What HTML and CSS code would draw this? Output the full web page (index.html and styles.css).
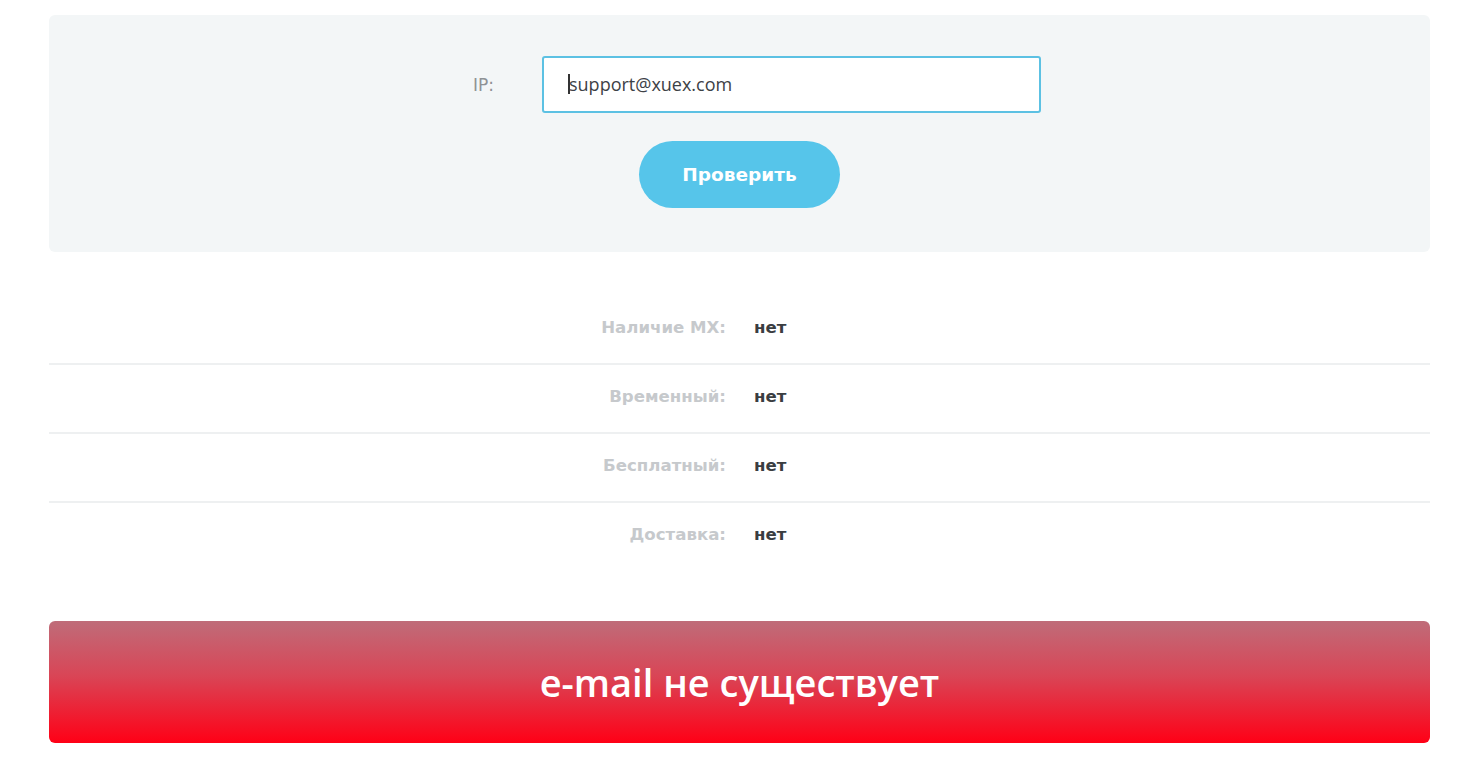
FILE: index.html
```html
<!DOCTYPE html>
<html lang="ru">
<head>
<meta charset="utf-8">
<link rel="stylesheet" href="styles.css">
</head>
<body>
<div class="page">
  <form class="check-panel">
    <div class="field-row">
      <label class="field-label">IP:</label>
      <div class="field-input"><span class="caret"></span>support@xuex.com</div>
    </div>
    <button type="button" class="check-btn">Проверить</button>
  </form>
  <div class="results">
    <div class="result-row"><span class="r-label">Наличие MX:</span><span class="r-value">нет</span></div>
    <div class="result-row"><span class="r-label">Временный:</span><span class="r-value">нет</span></div>
    <div class="result-row"><span class="r-label">Бесплатный:</span><span class="r-value">нет</span></div>
    <div class="result-row"><span class="r-label">Доставка:</span><span class="r-value">нет</span></div>
  </div>
  <div class="verdict">e-mail не существует</div>
</div>
</body>
</html>
```
FILE: styles.css
```css
* { box-sizing: border-box; }
html, body { margin: 0; padding: 0; background: #ffffff; }
body { font-family: "Open Sans", "Liberation Sans", sans-serif; }
.page {
  width: 1381px;
  margin-left: 49px;
  padding-top: 15px;
}
.check-panel {
  background: #f3f6f7;
  border-radius: 6px;
  padding: 41px 0 44px;
  display: flex;
  flex-direction: column;
  align-items: center;
  margin: 0;
}
.field-row {
  display: flex;
  align-items: center;
  margin-left: 35px;
}
.field-label {
  width: 69px;
  font-family: "DejaVu Sans", sans-serif;
  font-size: 17px;
  color: #8e9295;
}
.field-input {
  width: 499px;
  height: 57px;
  border: 2px solid #5cc1e3;
  border-radius: 3px;
  background: #fff;
  display: flex;
  align-items: center;
  padding-left: 24px;
  padding-bottom: 2px;
  font-family: "Open Sans", sans-serif;
  font-size: 18px;
  color: #3d4146;
}
.caret {
  display: inline-block;
  width: 2px;
  height: 20px;
  background: #333;
  margin-right: -1px;
}
.check-btn {
  margin-top: 28px;
  width: 201px;
  height: 67px;
  border: none;
  border-radius: 34px;
  background: #56c5ea;
  color: #fff;
  font-family: "DejaVu Sans", sans-serif;
  font-weight: bold;
  font-size: 18.5px;
  cursor: pointer;
}
.results {
  margin-top: 44px;
}
.result-row {
  display: grid;
  grid-template-columns: 677px 1fr;
  column-gap: 28px;
  padding: 22px 0 25px;
  line-height: 20px;
  border-bottom: 2px solid #eef0f1;
  font-family: "DejaVu Sans", sans-serif;
  font-weight: bold;
  font-size: 16.6px;
}
.result-row:last-child { border-bottom: none; }
.r-label { text-align: right; color: #c6c9cc; }
.r-value { color: #3a3d41; }
.verdict {
  margin-top: 51px;
  height: 122px;
  border-radius: 6px;
  background: linear-gradient(to bottom, #bf6c79 0%, #d94556 45%, #ff0016 100%);
  color: #fff;
  display: flex;
  align-items: center;
  justify-content: center;
  font-family: "Open Sans", sans-serif;
  font-weight: 600;
  font-size: 38px;
}
```
